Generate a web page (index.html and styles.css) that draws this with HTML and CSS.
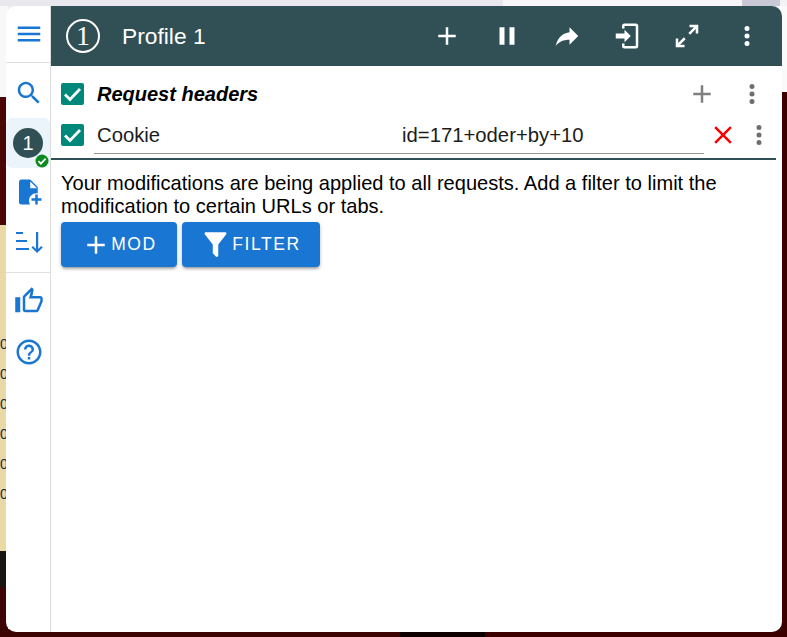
FILE: index.html
```html
<!DOCTYPE html>
<html lang="en">
<head>
<meta charset="utf-8">
<title>Profile 1</title>
<link rel="stylesheet" href="styles.css">
</head>
<body>
<div class="backdrop" aria-hidden="true">
  <div class="back-top"></div>
  <div class="back-left">
    <div class="back-light"></div>
    <div class="back-red"></div>
    <div class="back-yellow">
      <span class="back-cell">0</span><span class="back-cell">0</span><span class="back-cell">0</span>
      <span class="back-cell">0</span><span class="back-cell">0</span><span class="back-cell">0</span>
    </div>
    <div class="back-black"></div>
    <div class="back-red-low"></div>
  </div>
  <div class="back-right"><div class="back-right-light"></div></div>
  <div class="back-bottom"></div>
</div>

<main class="panel">
  <nav class="sidebar">
    <div class="side-top">
      <svg class="icon" viewBox="0 0 24 24"><path d="M3 18h18v-2H3v2zm0-5h18v-2H3v2zm0-7v2h18V6H3z"/></svg>
    </div>
    <div class="side-group">
      <div class="side-item">
        <svg class="icon" viewBox="0 0 24 24"><path d="M15.5 14h-.79l-.28-.27C15.41 12.59 16 11.11 16 9.5 16 5.91 13.09 3 9.5 3S3 5.91 3 9.5 5.91 16 9.5 16c1.61 0 3.09-.59 4.23-1.57l.27.28v.79l5 4.99L20.49 19l-4.99-5zm-6 0C7.01 14 5 11.99 5 9.5S7.01 5 9.5 5 14 7.01 14 9.5 11.99 14 9.5 14z"/></svg>
      </div>
      <div class="side-item side-active">
        <span class="profile-dot">1</span>
        <svg class="badge" viewBox="0 0 14 14"><circle cx="7" cy="7" r="6.5" fill="#0b8a1f"/><path d="M3.4 7.2l2.5 2.5 4.7-5" fill="none" stroke="#fff" stroke-width="1.7"/></svg>
      </div>
      <div class="side-item side-file">
        <svg class="icon" viewBox="0 0 24 24"><path d="M13 9V3.5L18.5 9M6 2c-1.11 0-2 .89-2 2v16a2 2 0 0 0 2 2h6.81c-.53-.91-.81-1.95-.81-3 0-3.31 2.69-6 6-6 .34 0 .67.03 1 .08V8l-6-6M17 14v3h-3v2h3v3h2v-3h3v-2h-3v-3z"/></svg>
      </div>
      <div class="side-item">
        <svg class="icon" viewBox="0 0 30 30"><path d="M2 4h7v2H2zM2 12h11v2H2zM2 20h13v2H2zM22 4h2.2v17l3-3 1.500 1.500-5.600 5.600-5.600-5.600 1.500-1.500 3 3z"/></svg>
      </div>
    </div>
    <div class="side-group side-rule">
      <div class="side-item">
        <svg class="icon" viewBox="0 0 24 24"><path d="M9 21h9c.83 0 1.54-.5 1.84-1.22l3.02-7.05c.09-.23.14-.47.14-.73v-2c0-1.1-.9-2-2-2h-6.31l.95-4.57.03-.32c0-.41-.17-.79-.44-1.06L14.17 1 7.58 7.59C7.22 7.95 7 8.45 7 9v10c0 1.1.9 2 2 2zM9 9l4.34-4.34L12 10h9v2l-3 7H9V9zM1 9h4v12H1z"/></svg>
      </div>
      <div class="side-item side-help">
        <svg class="icon" viewBox="0 0 24 24"><path d="M11 18h2v-2h-2v2zm1-16C6.48 2 2 6.48 2 12s4.48 10 10 10 10-4.48 10-10S17.52 2 12 2zm0 18c-4.41 0-8-3.59-8-8s3.59-8 8-8 8 3.59 8 8-3.59 8-8 8zm0-14c-2.21 0-4 1.79-4 4h2c0-1.1.9-2 2-2s2 .9 2 2c0 2-3 1.75-3 5h2c0-2.25 3-2.5 3-5 0-2.21-1.79-4-4-4z"/></svg>
      </div>
    </div>
  </nav>

  <section class="content">
    <header class="topbar">
      <span class="profile-ring">1</span>
      <h1 class="profile-name">Profile 1</h1>
      <div class="top-actions">
        <span class="top-btn"><svg class="icon" viewBox="0 0 24 24"><path d="M19,13H13V19H11V13H5V11H11V5H13V11H19V13Z"/></svg></span>
        <span class="top-btn"><svg class="icon" viewBox="0 0 24 24"><path d="M14,19H18V5H14M6,19H10V5H6V19Z"/></svg></span>
        <span class="top-btn"><svg class="icon" viewBox="0 0 24 24"><path d="M14 9V5l7 7-7 7v-4.1c-5 0-8.5 1.6-11 5.1 1-5 4-10 11-11z"/></svg></span>
        <span class="top-btn"><svg class="icon" viewBox="0 0 24 24"><path d="M10,17V14H3V10H10V7L15,12L10,17M10,2H19A2,2 0 0,1 21,4V20A2,2 0 0,1 19,22H10A2,2 0 0,1 8,20V18H10V20H19V4H10V6H8V4A2,2 0 0,1 10,2Z"/></svg></span>
        <span class="top-btn"><svg class="icon" viewBox="0 0 24 24"><path d="M10,21V19H6.41L10.91,14.5L9.5,13.09L5,17.59V14H3V21H10M14.5,10.91L19,6.41V10H21V3H14V5H17.59L13.09,9.5L14.5,10.91Z"/></svg></span>
        <span class="top-btn"><svg class="icon" viewBox="0 0 24 24"><path d="M12,16A2,2 0 0,1 14,18A2,2 0 0,1 12,20A2,2 0 0,1 10,18A2,2 0 0,1 12,16M12,10A2,2 0 0,1 14,12A2,2 0 0,1 12,14A2,2 0 0,1 10,12A2,2 0 0,1 12,10M12,4A2,2 0 0,1 14,6A2,2 0 0,1 12,8A2,2 0 0,1 10,6A2,2 0 0,1 12,4Z"/></svg></span>
      </div>
    </header>

    <div class="mods">
      <div class="mod-head">
        <span class="check"><svg viewBox="0 0 23 22"><path d="M4 11.500l5 5 10-10.500" fill="none" stroke="#fff" stroke-width="2.8"/></svg></span>
        <span class="mod-title">Request headers</span>
        <span class="row-btn row-plus"><svg class="icon" viewBox="0 0 24 24"><path d="M19,13H13V19H11V13H5V11H11V5H13V11H19V13Z"/></svg></span>
        <span class="row-btn row-dots"><svg class="icon" viewBox="0 0 24 24"><path d="M12,16A2,2 0 0,1 14,18A2,2 0 0,1 12,20A2,2 0 0,1 10,18A2,2 0 0,1 12,16M12,10A2,2 0 0,1 14,12A2,2 0 0,1 12,14A2,2 0 0,1 10,12A2,2 0 0,1 12,10M12,4A2,2 0 0,1 14,6A2,2 0 0,1 12,8A2,2 0 0,1 10,6A2,2 0 0,1 12,4Z"/></svg></span>
      </div>
      <div class="mod-row">
        <span class="check"><svg viewBox="0 0 23 22"><path d="M4 11.500l5 5 10-10.500" fill="none" stroke="#fff" stroke-width="2.8"/></svg></span>
        <div class="fields">
          <span class="field-name">Cookie</span>
          <span class="field-value">id=171+oder+by+10</span>
        </div>
        <span class="row-btn row-close"><svg class="icon" viewBox="0 0 24 24"><path d="M19,6.41L17.59,5L12,10.59L6.41,5L5,6.41L10.59,12L5,17.59L6.41,19L12,13.41L17.59,19L19,17.59L13.41,12L19,6.41Z"/></svg></span>
        <span class="row-btn row-dots row-dots-narrow"><svg class="icon" viewBox="0 0 24 24"><path d="M12,16A2,2 0 0,1 14,18A2,2 0 0,1 12,20A2,2 0 0,1 10,18A2,2 0 0,1 12,16M12,10A2,2 0 0,1 14,12A2,2 0 0,1 12,14A2,2 0 0,1 10,12A2,2 0 0,1 12,10M12,4A2,2 0 0,1 14,6A2,2 0 0,1 12,8A2,2 0 0,1 10,6A2,2 0 0,1 12,4Z"/></svg></span>
      </div>
      <hr class="mod-rule">
      <p class="notice">Your modifications are being applied to all requests. Add a filter to limit the modification to certain URLs or tabs.</p>
      <div class="buttons">
        <button class="action action-mod" type="button"><svg class="icon" viewBox="0 0 24 24"><path d="M19,13H13V19H11V13H5V11H11V5H13V11H19V13Z"/></svg>MOD</button>
        <button class="action action-filter" type="button"><svg class="icon" viewBox="0 0 24 24"><path d="M14,12V19.88C14.04,20.18 13.94,20.5 13.71,20.71C13.32,21.1 12.69,21.1 12.3,20.71L10.29,18.7C10.06,18.47 9.96,18.16 10,17.87V12H9.97L4.21,4.62C3.87,4.19 3.95,3.56 4.38,3.22C4.57,3.08 4.78,3 5,3V3H19V3C19.22,3 19.43,3.08 19.62,3.22C20.05,3.56 20.13,4.19 19.79,4.62L14.03,12H14Z"/></svg>FILTER</button>
      </div>
    </div>
  </section>
</main>
</body>
</html>
```

FILE: styles.css
```css
* { box-sizing: border-box; }

html, body { margin: 0; height: 100%; }

body {
  position: relative;
  width: 787px;
  height: 637px;
  overflow: hidden;
  padding: 6px 5px 5px 6px;
  background: #eeeef2;
  font-family: "Liberation Sans", Arial, sans-serif;
  color: #000;
}

/* Page visible behind the popup */
.backdrop { position: absolute; inset: 0; }

.back-top {
  height: 6px;
  background: linear-gradient(to right, #e8e8ee 0 503px, #f7f7f9 503px 742px, #c9c9d6 742px 780px, #f3f3f5 780px);
}

.back-left {
  position: absolute;
  left: 0; top: 6px; bottom: 0;
  width: 8px;
  display: flex;
  flex-direction: column;
}
.back-light { height: 91px; background: #f8f8f8; }
.back-red { height: 128px; background: #4a0505; }
.back-yellow {
  height: 326px;
  padding-top: 104px;
  background: #e9d9a4;
  display: flex;
  flex-direction: column;
  overflow: hidden;
}
.back-cell {
  flex: 0 0 30px;
  font-size: 14px;
  line-height: 30px;
  color: #1a2a44;
}
.back-black { height: 36px; background: #191512; }
.back-red-low { flex: 1; background: #3d0404; }

.back-right {
  position: absolute;
  right: 0; top: 6px; bottom: 0;
  width: 8px;
  background: #3d0000;
}
.back-right-light { height: 86px; background: #fafafa; }

.back-bottom {
  position: absolute;
  left: 0; right: 0; bottom: 0;
  height: 8px;
  background: linear-gradient(to right, #3d0404 0 400px, #0e0000 400px 485px, #3d0000 485px);
}

/* Popup */
.panel {
  position: relative;
  display: flex;
  width: 776px;
  height: 626px;
  background: #fff;
  border-radius: 10px;
  overflow: hidden;
}

.icon { display: block; width: 30px; height: 30px; fill: currentColor; }

.sidebar {
  flex: 0 0 45px;
  border-right: 1px solid #dcdcdc;
  color: #1976d2;
}
.sidebar .icon { margin-left: 2px; }
.side-top {
  height: 57px;
  border-bottom: 1px solid #e0e0e0;
  display: flex;
  align-items: center;
  justify-content: center;
  padding-bottom: 1px;
}
.side-group { padding-top: 5px; }
.side-item {
  position: relative;
  height: 50px;
  display: flex;
  align-items: center;
  justify-content: center;
}
.side-file { padding-bottom: 2px; }
.side-help { padding-top: 2px; }
.side-active { background: #ebf3fb; border-radius: 6px; }
.side-rule {
  margin-top: 4px;
  border-top: 1px solid #e0e0e0;
  padding-top: 3px;
}

.profile-dot {
  width: 30px;
  height: 30px;
  border-radius: 50%;
  background: #305055;
  color: #fff;
  font-size: 20px;
  line-height: 30px;
  text-align: center;
}
.badge {
  position: absolute;
  right: 1px;
  bottom: 0;
  width: 14px;
  height: 14px;
}

.content { flex: 1; min-width: 0; display: flex; flex-direction: column; }

.topbar {
  flex: 0 0 60px;
  display: flex;
  align-items: center;
  background: #305055;
  color: #fff;
  padding: 0 5px 0 15px;
}
.profile-ring {
  flex: 0 0 34px;
  height: 34px;
  border: 2px solid #fff;
  border-radius: 50%;
  font-family: "Liberation Serif", serif;
  font-size: 28px;
  line-height: 30px;
  text-align: center;
}
.profile-name {
  margin: 0 0 0 22px;
  font-size: 22.8px;
  font-weight: 400;
  flex: 1;
}
.top-actions { display: flex; }
.top-btn {
  width: 60px;
  height: 60px;
  display: flex;
  align-items: center;
  justify-content: center;
}

.mods { padding: 0 5px 0 10px; }

.mod-head {
  display: flex;
  align-items: center;
  height: 56px;
}
.mod-row {
  display: flex;
  align-items: center;
  height: 34px;
  margin-top: -4px;
}
.check {
  flex: 0 0 23px;
  height: 22px;
  background: #00897b;
  border-radius: 2px;
}
.check svg { display: block; width: 23px; height: 22px; }

.mod-title {
  margin-left: 13px;
  font-size: 20px;
  font-weight: 700;
  font-style: italic;
  flex: 1;
}
.row-btn { display: flex; align-items: center; justify-content: center; }
.row-plus { color: #7f7f7f; width: 30px; margin-right: 20px; }
.row-dots { color: #6e6e6e; width: 30px; margin-right: 10px; }

.fields {
  display: flex;
  align-items: center;
  width: 610px;
  height: 38px;
  margin: 0 0 0 10px;
  padding: 2px 0 0 3px;
  border-bottom: 1px solid #949494;
  font-size: 20.3px;
  color: #1c1c1c;
}
.field-name { flex: 0 0 305px; }

.row-close { color: #f00; width: 38px; }
.row-dots-narrow { margin: 0; width: 34px; }

.mod-rule {
  height: 2px;
  border: 0;
  margin: 0 1px 0 -10px;
  background: #305055;
  position: relative;
  top: 6px;
}

.notice {
  margin: 18px 0 0;
  font-size: 20.06px;
  line-height: 23px;
  width: 700px;
}

.buttons { display: flex; gap: 5px; margin-top: 4px; }

.action {
  height: 45px;
  display: flex;
  align-items: center;
  justify-content: center;
  border: 0;
  border-radius: 4px;
  background: #1976d2;
  color: #fff;
  font: 500 17.5px "Liberation Sans", Arial, sans-serif;
  letter-spacing: 1.6px;
  padding: 0;
  box-shadow: 0 3px 3px -2px rgba(0,0,0,.25), 0 2px 3px 0 rgba(0,0,0,.16), 0 1px 5px 0 rgba(0,0,0,.12);
}
.action-mod { width: 116px; }
.action-filter { width: 138px; padding-right: 2px; }
.action-filter .icon { width: 33px; height: 33px; }
```
